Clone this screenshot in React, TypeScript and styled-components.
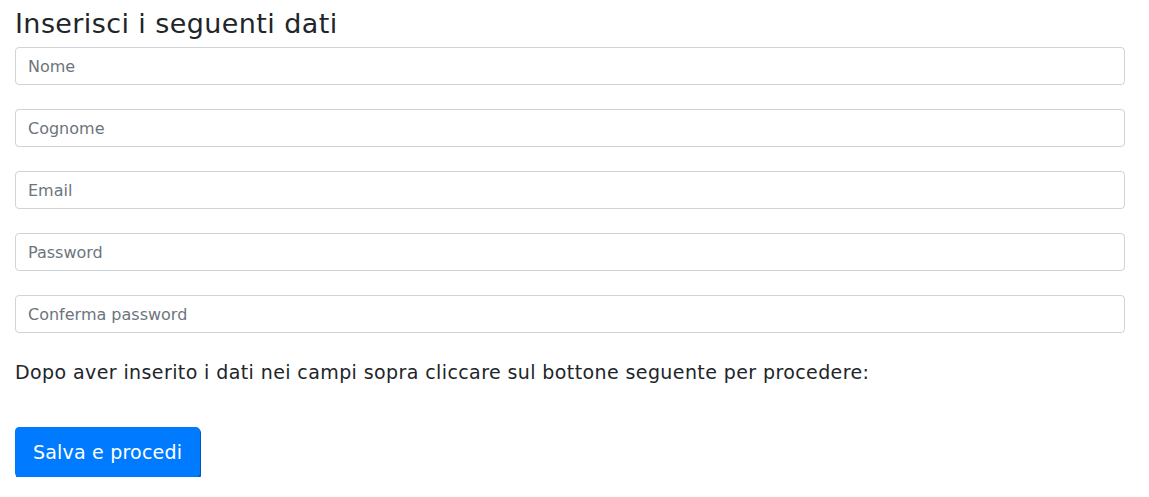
import React from 'react';
import styled, { createGlobalStyle } from 'styled-components';

const GlobalStyle = createGlobalStyle`
  body {
    margin: 0;
    background: #fff;
    font-family: 'DejaVu Sans', 'Open Sans', sans-serif;
    color: #212529;
  }
`;

const Page = styled.div`
  width: 1110px;
  padding: 0 15px;
`;

const Title = styled.h3`
  margin: 8px 0 7px;
  font-size: 27px;
  font-weight: 400;
  line-height: 1.2;
  letter-spacing: 0.4px;
`;

const Form = styled.form`
  display: flex;
  flex-direction: column;
  gap: 24px;
`;

const Field = styled.input`
  box-sizing: border-box;
  width: 100%;
  height: 38px;
  padding: 6px 12px;
  font-family: inherit;
  font-size: 16px;
  color: #495057;
  border: 1px solid #ced4da;
  border-radius: 4px;
  outline: none;

  &::placeholder {
    color: #6c757d;
  }
`;

const Note = styled.p`
  margin: 25px 0 0;
  font-size: 19px;
  line-height: 1.5;
  letter-spacing: 0.4px;
`;

const Button = styled.button`
  margin-top: 40px;
  height: 50px;
  padding: 0 17px;
  font-family: inherit;
  font-size: 19px;
  letter-spacing: 0.2px;
  color: #fff;
  background: #007bff;
  border: 1px solid #007bff;
  border-radius: 4px;
  box-shadow: 1px 2px 0 #0059b8;
`;

const fields = ['Nome', 'Cognome', 'Email', 'Password', 'Conferma password'];

export default function App() {
  return (
    <Page>
      <GlobalStyle />
      <Title>Inserisci i seguenti dati</Title>
      <Form>
        {fields.map((f) => (
          <Field key={f} placeholder={f} type={f.includes('assword') ? 'password' : 'text'} />
        ))}
      </Form>
      <Note>Dopo aver inserito i dati nei campi sopra cliccare sul bottone seguente per procedere:</Note>
      <Button>Salva e procedi</Button>
    </Page>
  );
}
